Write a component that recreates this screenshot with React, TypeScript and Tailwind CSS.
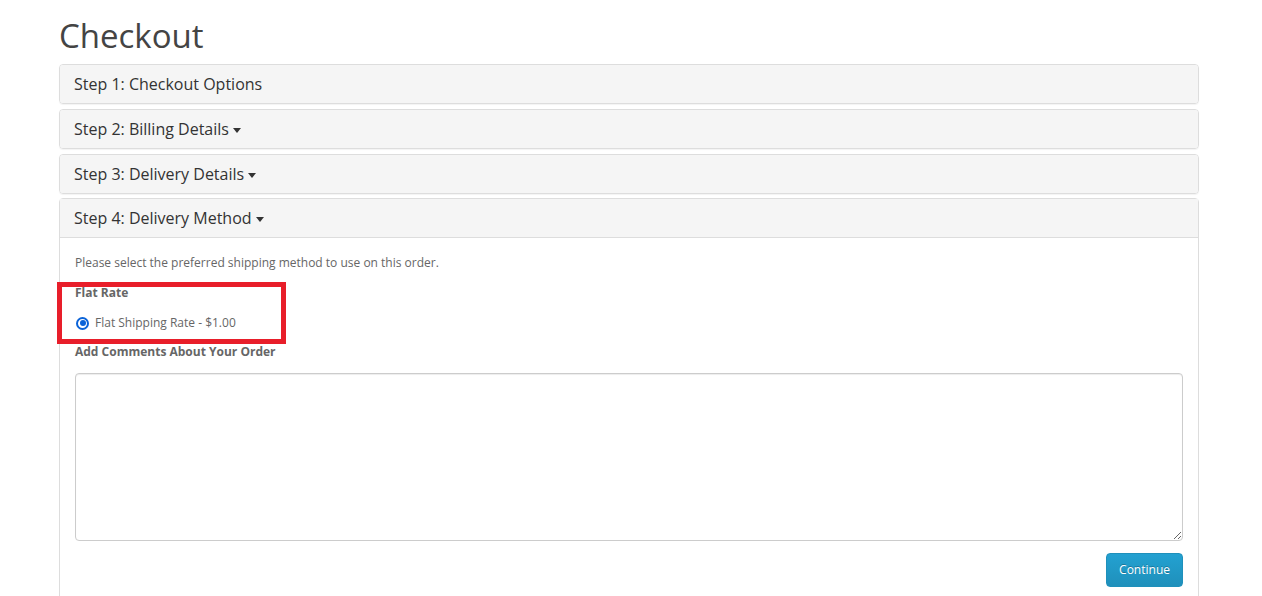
import React from "react";

/**
 * Checkout page - accordion of steps, step 4 open
 */
export default function App() {
    return (
        <div className="min-h-screen bg-white text-[#666] text-[12px]" style={{ fontFamily: '"Open Sans", sans-serif' }}>
            <div className="relative w-[1140px] ml-[59px] pt-[18px]">
                <h1 className="text-[33px] leading-[1.1] text-[#444] mb-[10px]">Checkout</h1>

                <Panel title="Step 1: Checkout Options" />
                <Panel title="Step 2: Billing Details" caret />
                <Panel title="Step 3: Delivery Details" caret last />

                {/* Step 4 (open) */}
                <div className="border border-[#ddd] rounded-t-[4px]">
                    <Heading title="Step 4: Delivery Method" caret />
                    <div className="border-t border-[#ddd] p-[15px]">
                        <p className="leading-[20px] mb-[10px]">Please select the preferred shipping method to use on this order.</p>
                        <p className="leading-[20px] mb-[10px] font-bold">Flat Rate</p>
                        <label className="flex items-center gap-[6px] leading-[20px] mb-[9px] pl-px">
                            <span className="w-[13px] h-[13px] rounded-full border-2 border-[#0b63d8] flex items-center justify-center">
                                <span className="w-[6px] h-[6px] rounded-full bg-[#0b63d8]" />
                            </span>
                            <span>Flat Shipping Rate - $1.00</span>
                        </label>
                        <p className="leading-[20px] mb-[11px] font-bold">Add Comments About Your Order</p>
                        <textarea
                            className="block w-full h-[168px] border border-[#ccc] rounded-[4px] shadow-[inset_0_1px_1px_rgba(0,0,0,0.075)] p-2 outline-none"
                        />
                        <div className="flex justify-end mt-[12px]">
                            <button className="h-[34px] px-[12px] rounded-[4px] border border-[#1f90bb] bg-gradient-to-b from-[#23a1d1] to-[#1f90bb] text-white text-[12px] [text-shadow:0_-1px_0_rgba(0,0,0,0.25)]">
                                Continue
                            </button>
                        </div>
                    </div>
                </div>

                {/* annotation highlight */}
                <div className="absolute left-[-2px] top-[282px] w-[229px] h-[62px] border-[5px] border-[#e81e2a] pointer-events-none" />
            </div>
        </div>
    );
}

function Heading({ title, caret }: { title: string; caret?: boolean }) {
    return (
        <div className="bg-[#f5f5f5] px-[14px] py-[10px] text-[16px] leading-[18px] text-[#333] flex items-center">
            <span>{title}</span>
            {caret && (
                <span className="ml-[4px] mt-[2px] w-0 h-0 border-x-[4.5px] border-x-transparent border-t-[5px] border-t-[#333]" />
            )}
        </div>
    );
}

function Panel({ title, caret, last }: { title: string; caret?: boolean; last?: boolean }) {
    return (
        <div className={`border border-[#ddd] rounded-[4px] overflow-hidden shadow-[0_1px_1px_rgba(0,0,0,0.05)] ${last ? "mb-[4px]" : "mb-[5px]"}`}>
            <Heading title={title} caret={caret} />
        </div>
    );
}
